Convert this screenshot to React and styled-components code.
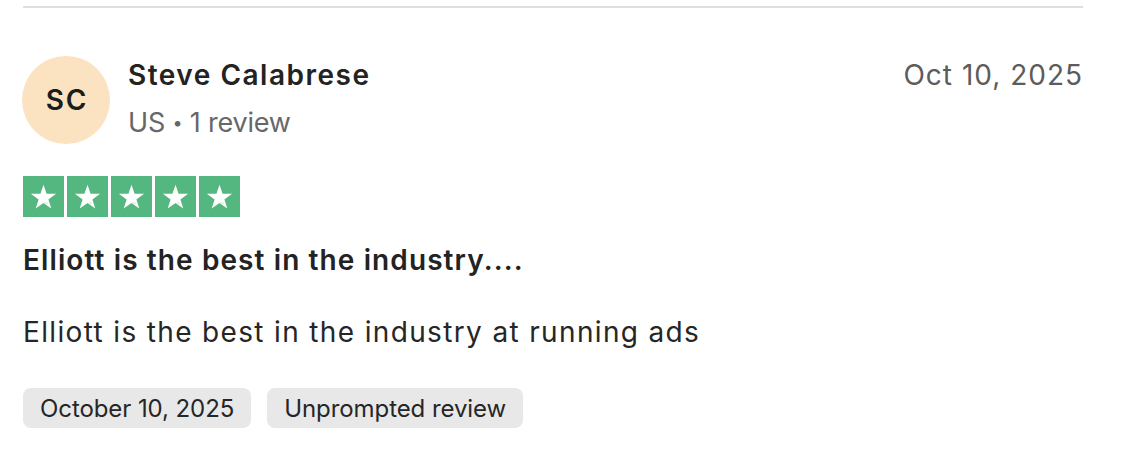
import React from "react"
import styled, { createGlobalStyle } from "styled-components"

const GlobalStyle = createGlobalStyle`
  html, body {
    margin: 0;
    padding: 0;
    background: #ffffff;
  }
  body {
    font-family: Inter, "Noto Sans", "Liberation Sans", sans-serif;
    color: #1f1f1f;
  }
`

const review = {
  initials: "SC",
  name: "Steve Calabrese",
  country: "US",
  reviews: "1 review",
  shortDate: "Oct 10, 2025",
  rating: 5,
  title: "Elliott is the best in the industry....",
  body: "Elliott is the best in the industry at running ads",
  tags: ["October 10, 2025", "Unprompted review"],
}

function Star() {
  return (
    <svg width="27" height="27" viewBox="0 0 24 24">
      <path
        d="M12 1.6l2.75 8.05h8.45l-6.85 4.95 2.6 8.05L12 17.7l-6.95 4.95 2.6-8.05L0.8 9.65h8.45z"
        fill="#ffffff"
      />
      <path d="M15.3 16.6l0.75 2.5L12 17.7z" fill="#d7efe2" />
    </svg>
  )
}

export default function App() {
  return (
    <>
      <GlobalStyle />
      <Card>
        <Divider />
        <Header>
          <Avatar>{review.initials}</Avatar>
          <Who>
            <Name>{review.name}</Name>
            <Meta>
              {review.country} <Dot>•</Dot> {review.reviews}
            </Meta>
          </Who>
          <ShortDate>{review.shortDate}</ShortDate>
        </Header>
        <Stars>
          {Array.from({ length: review.rating }).map((_, i) => (
            <StarBox key={i}>
              <Star />
            </StarBox>
          ))}
        </Stars>
        <Title>{review.title}</Title>
        <Body>{review.body}</Body>
        <Tags>
          {review.tags.map(t => (
            <Tag key={t}>{t}</Tag>
          ))}
        </Tags>
      </Card>
    </>
  )
}

const Card = styled.div`
  width: 1060px;
  margin-left: 23px;
  padding-top: 6px;
  display: flex;
  flex-direction: column;
`

const Divider = styled.div`
  height: 2px;
  background: #dedede;
`

const Header = styled.div`
  display: flex;
  align-items: flex-start;
  margin-top: 48px;
`

const Avatar = styled.div`
  width: 88px;
  height: 88px;
  border-radius: 50%;
  background: #fbe3c2;
  flex-shrink: 0;
  display: flex;
  align-items: center;
  justify-content: center;
  font-size: 28px;
  font-weight: 600;
  letter-spacing: 1.8px;
  padding-left: 1.8px;
  box-sizing: border-box;
  color: #1c1c1c;
  margin-left: -1px;
`

const Who = styled.div`
  display: flex;
  flex-direction: column;
  margin-left: 18px;
  margin-top: 2px;
  flex: 1;
`

const Name = styled.div`
  font-size: 28px;
  font-weight: 600;
  line-height: 34px;
  letter-spacing: 1.5px;
  color: #232323;
`

const Meta = styled.div`
  font-size: 27px;
  line-height: 32px;
  margin-top: 15px;
  color: #676767;
  letter-spacing: -0.2px;
`

const Dot = styled.span`
  font-size: 18px;
  vertical-align: 3px;
`

const ShortDate = styled.div`
  font-size: 28px;
  line-height: 34px;
  color: #5c5c5c;
  margin-top: 2px;
  letter-spacing: 1px;
`

const Stars = styled.div`
  display: flex;
  gap: 3px;
  margin-top: 32px;
`

const StarBox = styled.div`
  width: 41px;
  height: 41px;
  background: #54b77f;
  display: flex;
  align-items: center;
  justify-content: center;
`

const Title = styled.div`
  font-size: 28px;
  font-weight: 600;
  line-height: 34px;
  margin-top: 26px;
  letter-spacing: 1.1px;
  color: #232323;
`

const Body = styled.div`
  font-size: 28px;
  line-height: 34px;
  margin-top: 38px;
  letter-spacing: 1.35px;
  color: #262626;
`

const Tags = styled.div`
  display: flex;
  gap: 16px;
  margin-top: 39px;
`

const Tag = styled.div`
  background: #e8e8e8;
  border-radius: 8px;
  height: 40px;
  padding: 0 17px;
  display: flex;
  align-items: center;
  font-size: 24px;
  letter-spacing: -0.08px;
  color: #262626;
`
